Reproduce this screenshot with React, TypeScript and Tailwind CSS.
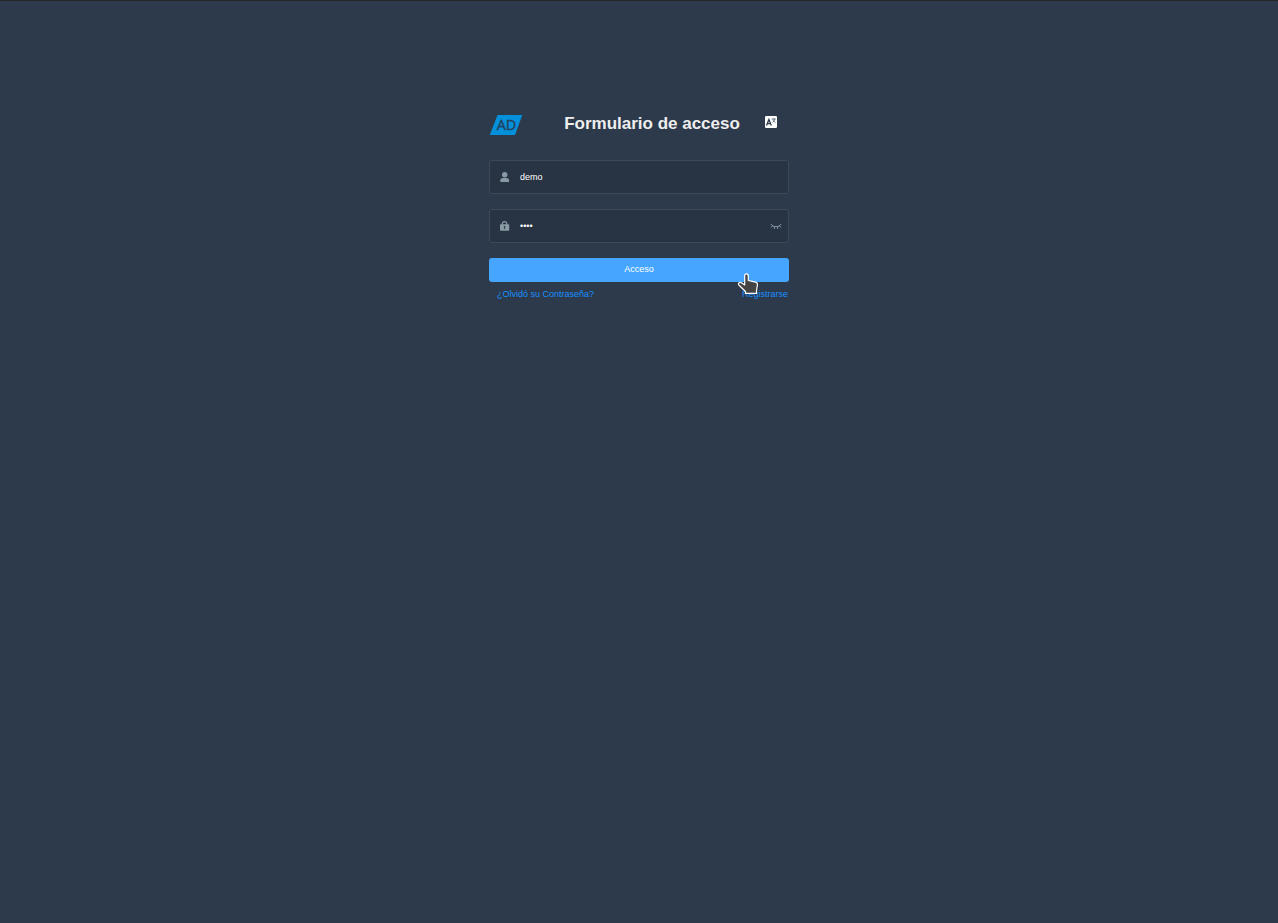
import { useState } from "react";

function LogoMark() {
  return (
    <svg viewBox="0 0 34 20" className="h-5 w-[34px]" role="img" aria-label="AD">
      <path d="M8.5 0H33.300L26 20H.8Z" fill="#0590dc" />
      <text x="17.500" y="15" textAnchor="middle" fontFamily="Open Sans, sans-serif" fontSize="14.500" fill="#24405c" stroke="#24405c" strokeWidth="0.4">
        AD
      </text>
    </svg>
  );
}

function LanguageIcon() {
  return (
    <svg viewBox="0 0 12 12" className="size-3" aria-hidden="true">
      <rect width="12" height="12" rx="1.2" fill="#fff" />
      <path d="M1.500 9.500 3.900 3.600 6.300 9.500M2.400 7.600h3.100" fill="none" stroke="#2d3a4b" strokeWidth="1.300" />
      <path d="M6.800 3h4M8.800 2v1M7.400 6.600C8.800 5.800 9.700 4.600 10 3M7.600 3c.4 1.500 1.500 2.900 3 3.600" fill="none" stroke="#2d3a4b" strokeWidth="0.6" />
    </svg>
  );
}

function UserIcon() {
  return (
    <svg viewBox="0 0 10 10" className="size-2.5" fill="#889aa4" aria-hidden="true">
      <ellipse cx="4.700" cy="2.700" rx="2.700" ry="2.700" />
      <path d="M.2 9.300C.2 6.900 1.200 5.900 3 5.900h3.400c1.800 0 2.800 1 2.800 3.400 0 .4-.2.700-.7.700H.9c-.5 0-.7-.3-.7-.7Z" />
    </svg>
  );
}

function LockIcon() {
  return (
    <svg viewBox="0 0 10 10" className="size-2.5" aria-hidden="true">
      <path d="M2.300 4V2.900a2.300 2.300 0 0 1 4.600 0V4" fill="none" stroke="#889aa4" strokeWidth="1.200" />
      <rect x="0" y="3.200" width="9.200" height="6.500" rx=".9" fill="#889aa4" />
      <path d="M4.600 5.200v2.800M3.900 5.600h1.400" stroke="#283443" strokeWidth="0.9" />
    </svg>
  );
}

function ClosedEyeIcon() {
  return (
    <svg viewBox="0 0 12 8" className="h-2 w-3" fill="none" stroke="#889aa4" strokeWidth="1" strokeLinecap="round" aria-hidden="true">
      <path d="M1 2.300C3.200 5.500 8.800 5.500 11 2.300M2.600 4 1.200 5.200M4.700 4.900 4.300 6.600M7.300 4.900 7.700 6.600M9.400 4 10.800 5.200" />
    </svg>
  );
}

function HandPointer() {
  return (
    <svg viewBox="0 0 22 22" className="pointer-events-none absolute top-[15px] right-[30px] size-[22px]" aria-hidden="true">
      <path
        d="M7.700 3Q7.700 .8 9.500 .8T11.300 3V7.500L18.500 9.100Q20.600 9.600 20.500 11.500L19.500 17.500V20.300H8.500V18.500L1.800 12Q.8 10.500 2.100 9.700 3.300 9 4.800 10L7.700 12Z"
        fill="#444"
        stroke="#fff"
        strokeWidth="1.200"
        strokeLinejoin="round"
      />
    </svg>
  );
}

const fieldClass = "flex h-[34px] items-center rounded-[3px] border border-[#3e4957] bg-[#283443] pr-1.5 pl-2.5";
const inputClass = "ml-2.5 min-w-0 flex-1 bg-transparent text-[9px] leading-4 text-white outline-none";

export default function App() {
  const [user, setUser] = useState("demo");
  const [password, setPassword] = useState("demo");
  const [visible, setVisible] = useState(false);

  return (
    <main className="min-h-screen border-t border-[#252525] bg-[#2d3a4b] px-4 pt-[111px] font-['Liberation_Sans',Arial,sans-serif]">
      <form className="mx-auto max-w-[300px]" onSubmit={(event) => event.preventDefault()}>
        <header className="mb-6 flex h-6 items-center justify-between pr-3">
          <div className="pt-0.5">
            <LogoMark />
          </div>
          <h1 className="ml-4 text-[17px] leading-6 font-bold text-[#eee]">Formulario de acceso</h1>
          <button type="button" aria-label="Idioma" className="pb-1">
            <LanguageIcon />
          </button>
        </header>

        <div className="flex flex-col gap-[15px]">
          <div className={fieldClass}>
            <label htmlFor="user" aria-label="Usuario">
              <UserIcon />
            </label>
            <input id="user" className={inputClass} value={user} onChange={(event) => setUser(event.target.value)} />
          </div>
          <div className={fieldClass}>
            <label htmlFor="password" aria-label="Contraseña">
              <LockIcon />
            </label>
            <input
              id="password"
              type={visible ? "text" : "password"}
              className={inputClass}
              value={password}
              onChange={(event) => setPassword(event.target.value)}
            />
            <button type="button" aria-label="Mostrar contraseña" onClick={() => setVisible(!visible)}>
              <ClosedEyeIcon />
            </button>
          </div>
          <div className="relative">
            <button type="submit" className="block h-6 w-full rounded-[3px] bg-[#46a6ff] pb-0.5 text-center text-[9px] leading-4 text-white">
              Acceso
            </button>
            <HandPointer />
          </div>
        </div>

        <nav className="mt-1 flex justify-between pr-px pl-2 text-[9px] leading-4 text-[#1890ff]">
          <a href="#recuperar">¿Olvidó su Contraseña?</a>
          <a href="#registro">Registrarse</a>
        </nav>
      </form>
    </main>
  );
}
